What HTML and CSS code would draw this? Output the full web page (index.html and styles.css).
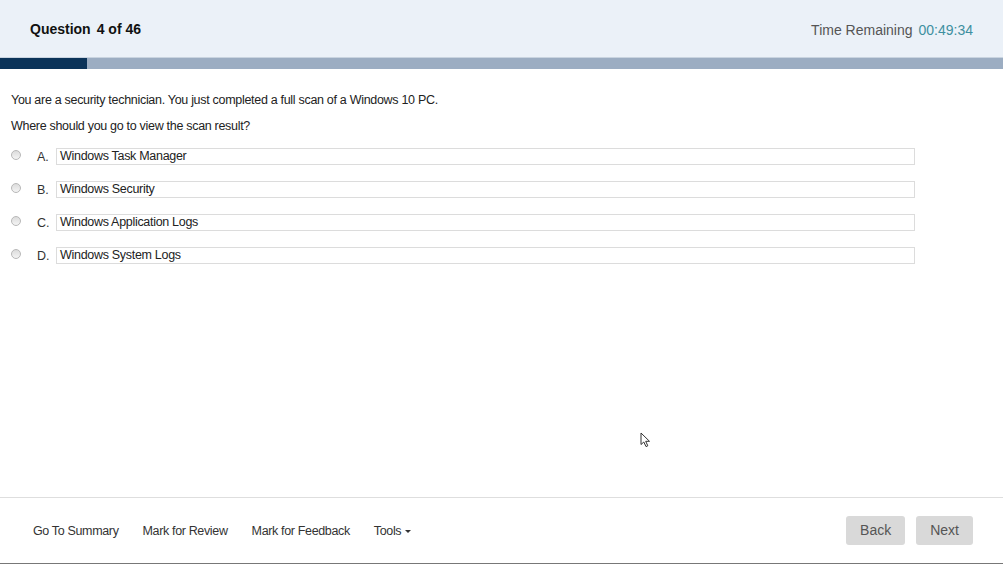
FILE: index.html
```html
<!DOCTYPE html>
<html>
<head>
<meta charset="utf-8">
<link rel="stylesheet" href="styles.css">
</head>
<body>
<div class="page">
  <header class="top">
    <div class="qnum"><span class="qlabel">Question</span><span>4 of 46</span></div>
    <div class="timer"><span class="tlabel">Time Remaining</span><span class="tval">00:49:34</span></div>
  </header>
  <div class="progress"><div class="progress-fill" style="width:87px"></div></div>
  <main class="content">
    <p class="stem">You are a security technician. You just completed a full scan of a Windows 10 PC.</p>
    <p class="stem">Where should you go to view the scan result?</p>
    <div class="options">
      <label class="opt"><span class="radio"></span><span class="letter">A.</span><span class="box">Windows Task Manager</span></label>
      <label class="opt"><span class="radio"></span><span class="letter">B.</span><span class="box">Windows Security</span></label>
      <label class="opt"><span class="radio"></span><span class="letter">C.</span><span class="box">Windows Application Logs</span></label>
      <label class="opt"><span class="radio"></span><span class="letter">D.</span><span class="box">Windows System Logs</span></label>
    </div>
  </main>
  <footer class="bottom">
    <nav class="links">
      <span class="link">Go To Summary</span>
      <span class="link">Mark for Review</span>
      <span class="link">Mark for Feedback</span>
      <span class="link">Tools <span class="caret"></span></span>
    </nav>
    <div class="buttons">
      <span class="btn">Back</span>
      <span class="btn">Next</span>
    </div>
  </footer>
  <svg class="cursor" width="12" height="16" viewBox="0 0 12 16"><path d="M1 1 L1 12.5 L3.8 10 L6 14.6 L7.8 13.8 L5.7 9.3 L9.5 9.3 Z" fill="#fff" stroke="#333" stroke-width="1"/></svg>
</div>
</body>
</html>
```

FILE: styles.css
```css
* { box-sizing: border-box; }
html, body { margin: 0; padding: 0; }
body {
  width: 1003px;
  height: 564px;
  overflow: hidden;
  background: #fff;
  font-family: "Liberation Sans", Arial, sans-serif;
  color: #222;
}
.page {
  position: relative;
  height: 564px;
  display: flex;
  flex-direction: column;
}
.top {
  height: 57px;
  background: #ebf1f8;
  display: flex;
  justify-content: space-between;
  align-items: center;
  padding: 0 30px 0 30px;
}
.qnum {
  font-weight: bold;
  font-size: 14px;
  color: #111;
}
.qlabel { margin-right: 6px; }
.timer {
  font-size: 14px;
  margin-top: 3px;
}
.tlabel { color: #555; margin-right: 6px; }
.tval { color: #3e8fa0; }
.progress {
  height: 12px;
  background: #9cadc2;
  border-top: 1px solid #c9d4e0;
}
.progress-fill {
  height: 100%;
  background: #0b3359;
}
.content {
  flex: 1;
  padding: 24px 11px 0 11px;
}
.stem {
  margin: 0 0 12px 0;
  font-size: 12.5px;
  letter-spacing: -0.3px;
  line-height: 14px;
}
.options {
  display: flex;
  flex-direction: column;
  gap: 16px;
  margin-top: 15px;
}
.opt {
  display: flex;
  align-items: center;
  height: 17px;
}
.radio {
  width: 10px;
  height: 10px;
  border-radius: 50%;
  border: 1px solid #b8b8b8;
  background: linear-gradient(#dcdcdc, #f4f4f4);
  margin-top: -3px;
}
.letter {
  width: 35px;
  padding-left: 16px;
  font-size: 12.5px;
  color: #333;
}
.box {
  width: 859px;
  height: 17px;
  border: 1px solid #dcdcdc;
  font-size: 12.5px;
  letter-spacing: -0.3px;
  line-height: 15px;
  padding-left: 3px;
  color: #222;
}
.bottom {
  height: 67px;
  border-top: 1px solid #dedede;
  border-bottom: 1px solid #777;
  display: flex;
  justify-content: space-between;
  align-items: center;
  padding: 0 30px 0 33px;
}
.links {
  display: flex;
  gap: 24px;
  font-size: 12.5px;
  letter-spacing: -0.35px;
  color: #333;
}
.caret {
  display: inline-block;
  width: 0;
  height: 0;
  border-left: 3px solid transparent;
  border-right: 3px solid transparent;
  border-top: 3px solid #333;
  vertical-align: middle;
  margin-left: 1px;
}
.buttons {
  display: flex;
  gap: 11px;
}
.btn {
  background: #d9d9d9;
  color: #555;
  font-size: 14px;
  height: 29px;
  line-height: 29px;
  padding: 0 14px;
  border-radius: 3px;
}
.cursor {
  position: absolute;
  left: 640px;
  top: 432px;
}
```
